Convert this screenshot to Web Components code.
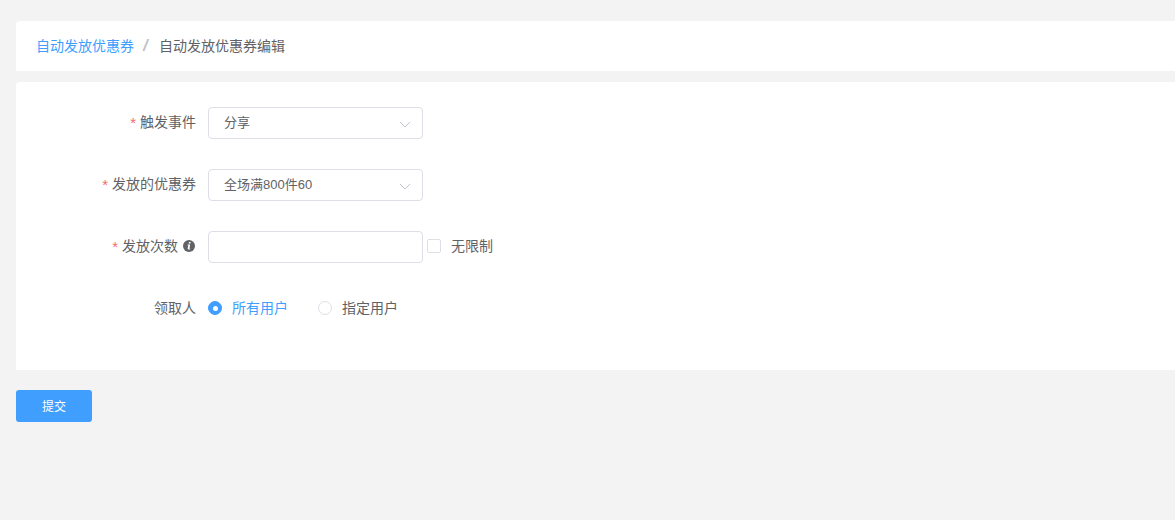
<!DOCTYPE html>
<html lang="zh">
<head>
<meta charset="utf-8">
<title>自动发放优惠券编辑</title>
<style>
    html, body {
        margin: 0;
        height: 100%;
        overflow: hidden;
        background-color: #f3f3f3;
        font-family: "Liberation Sans", "Noto Sans CJK SC", sans-serif;
        font-size: 14px;
        color: #606266;
    }
</style>
</head>
<body>
<coupon-page>
    <bread-crumb slot="crumb" link="自动发放优惠券" current="自动发放优惠券编辑"></bread-crumb>
    <form-item label="触发事件" required><select-box value="分享"></select-box></form-item>
    <form-item label="发放的优惠券" required><select-box value="全场满800件60"></select-box></form-item>
    <form-item label="发放次数" required hint>
        <text-input></text-input>
        <check-box label="无限制"></check-box>
    </form-item>
    <form-item label="领取人">
        <radio-dot label="所有用户" checked></radio-dot>
        <radio-dot label="指定用户"></radio-dot>
    </form-item>
    <primary-button slot="actions">提交</primary-button>
</coupon-page>

<script>
class CouponPage extends HTMLElement {
    connectedCallback() {
        this.attachShadow({mode: "open"}).innerHTML = `
<style>
    :host {
        display: block;
        padding: 21px 0 0 16px;
        margin-right: -4px;
    }
    .form {
        margin-top: 11px;
        padding: 25px 0 15px;
        background-color: #fff;
        border-radius: 4px 0 0 0;
    }
    .actions {
        margin-top: 20px;
    }
</style>
<slot name="crumb"></slot>
<div class="form"><slot></slot></div>
<div class="actions"><slot name="actions"></slot></div>`;
    }
}

class BreadCrumb extends HTMLElement {
    connectedCallback() {
        this.attachShadow({mode: "open"}).innerHTML = `
<style>
    :host {
        display: flex;
        align-items: center;
        height: 50px;
        padding-left: 20px;
        background-color: #fff;
        border-radius: 4px 0 0 0;
        font-size: 14px;
        color: #606266;
    }
    span { padding-bottom: 2px; }
    .link { color: #409eff; }
    .sep {
        margin: 0 9px;
        padding-bottom: 0;
        color: #c0c4cc;
        font-size: 17px;
        font-weight: 700;
        font-style: italic;
        width: 7px;
    }
</style>
<span class="link">${this.getAttribute("link")}</span>
<span class="sep">/</span>
<span>${this.getAttribute("current")}</span>`;
    }
}

class FormItem extends HTMLElement {
    connectedCallback() {
        const star = this.hasAttribute("required") ? `<span class="star">*</span>` : "";
        const hint = this.hasAttribute("hint") ? `
            <svg class="hint" width="12" height="12" viewBox="0 0 12 12">
                <circle cx="6" cy="6" r="6" fill="#606266"/>
                <path d="M7.7 2h-1.7l-.3 1.6h1.7zM7.1 4.5H4.6l-.1.7h.8l-.6 3.1c-.1.7.2 1.2 1 1.2h1.4l.1-.7h-.7z" fill="#fff"/>
            </svg>` : "";
        this.attachShadow({mode: "open"}).innerHTML = `
<style>
    :host {
        display: flex;
        min-height: 32px;
        margin-bottom: 30px;
    }
    .label {
        box-sizing: border-box;
        width: 192px;
        padding-right: 12px;
        display: flex;
        justify-content: flex-end;
        align-items: center;
        height: 32px;
        white-space: nowrap;
    }
    .text { padding-bottom: 4px; }
    .star {
        color: #f56c6c;
        margin-right: 4px;
        font-size: 15px;
        padding-bottom: 2px;
    }
    .hint {
        margin-left: 5px;
        margin-right: 1px;
        margin-bottom: 2px;
        flex-shrink: 0;
    }
    .control {
        display: flex;
        align-items: center;
    }
</style>
<div class="label">${star}<span class="text">${this.getAttribute("label")}</span>${hint}</div>
<div class="control"><slot></slot></div>`;
    }
}

class SelectBox extends HTMLElement {
    connectedCallback() {
        this.attachShadow({mode: "open"}).innerHTML = `
<style>
    :host {
        box-sizing: border-box;
        display: flex;
        align-items: center;
        justify-content: space-between;
        width: 215px;
        height: 32px;
        padding: 0 11px 0 15px;
        border: 1px solid #dcdfe6;
        border-radius: 4px;
        background-color: #fff;
        font-size: 13px;
        color: #606266;
    }
    span { padding-bottom: 4px; }
    svg { margin-top: 3px; }
</style>
<span>${this.getAttribute("value")}</span>
<svg width="12" height="7" viewBox="0 0 12 7"><path d="M1 1l5 5 5-5" fill="none" stroke="#c0c4cc" stroke-width="1"/></svg>`;
    }
}

class TextInput extends HTMLElement {
    connectedCallback() {
        this.attachShadow({mode: "open"}).innerHTML = `
<style>
    :host {
        box-sizing: border-box;
        display: block;
        width: 215px;
        height: 32px;
        border: 1px solid #dcdfe6;
        border-radius: 4px;
        background-color: #fff;
    }
</style>`;
    }
}

class CheckBox extends HTMLElement {
    connectedCallback() {
        this.attachShadow({mode: "open"}).innerHTML = `
<style>
    :host {
        display: flex;
        align-items: center;
        margin-left: 4px;
        font-size: 14px;
        color: #606266;
    }
    .box {
        box-sizing: border-box;
        width: 14px;
        height: 14px;
        margin-right: 10px;
        margin-bottom: 2px;
        border: 1px solid #dcdfe6;
        border-radius: 2px;
        background-color: #fff;
    }
    .text { padding-bottom: 4px; }
</style>
<span class="box"></span><span class="text">${this.getAttribute("label")}</span>`;
    }
}

class RadioDot extends HTMLElement {
    connectedCallback() {
        this.attachShadow({mode: "open"}).innerHTML = `
<style>
    :host {
        display: flex;
        align-items: center;
        margin-right: 30px;
        font-size: 14px;
        color: #606266;
    }
    :host([checked]) { color: #409eff; }
    .dot {
        box-sizing: border-box;
        width: 14px;
        height: 14px;
        margin-right: 10px;
        margin-bottom: 2px;
        display: flex;
        align-items: center;
        justify-content: center;
        border: 1px solid #dcdfe6;
        border-radius: 50%;
        background-color: #fff;
    }
    :host([checked]) .dot {
        border-color: #409eff;
        background-color: #409eff;
    }
    :host([checked]) .dot::after {
        content: "";
        width: 5px;
        height: 5px;
        border-radius: 50%;
        background-color: #fff;
    }
    .text { padding-bottom: 4px; }
</style>
<span class="dot"></span><span class="text">${this.getAttribute("label")}</span>`;
    }
}

class PrimaryButton extends HTMLElement {
    connectedCallback() {
        this.attachShadow({mode: "open"}).innerHTML = `
<style>
    :host {
        display: flex;
        align-items: center;
        justify-content: center;
        width: 76px;
        height: 32px;
        border-radius: 3px;
        background-color: #409eff;
        color: #fff;
        font-size: 12px;
    }
    span { padding-bottom: 2px; }
</style>
<span><slot></slot></span>`;
    }
}

customElements.define("coupon-page", CouponPage);
customElements.define("bread-crumb", BreadCrumb);
customElements.define("form-item", FormItem);
customElements.define("select-box", SelectBox);
customElements.define("text-input", TextInput);
customElements.define("check-box", CheckBox);
customElements.define("radio-dot", RadioDot);
customElements.define("primary-button", PrimaryButton);
</script>
</body>
</html>
